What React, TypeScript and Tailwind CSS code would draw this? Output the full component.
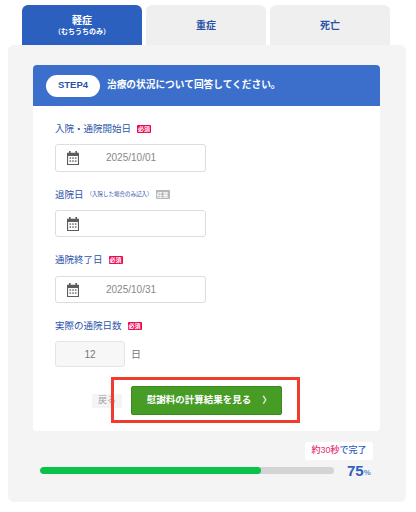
const FONT = "font-['Liberation_Sans','Noto_Sans_CJK_JP',sans-serif]"

function CalendarIcon() {
  return (
    <svg width="12" height="14" viewBox="0 0 12 14" fill="#5c5c5c">
      <rect x="2" y="0" width="1.6" height="3" />
      <rect x="8.4" y="0" width="1.6" height="3" />
      <path fillRule="evenodd" d="M0 1.8h12V14H0zM1.1 5v7.9h9.8V5z" />
      <rect x="2.5" y="6.4" width="1.6" height="1.3" />
      <rect x="5.2" y="6.4" width="1.6" height="1.3" />
      <rect x="7.9" y="6.4" width="1.6" height="1.3" />
      <rect x="2.5" y="9.4" width="1.6" height="1.3" />
      <rect x="5.2" y="9.4" width="1.6" height="1.3" />
      <rect x="7.9" y="9.4" width="1.6" height="1.3" />
    </svg>
  )
}

function Required() {
  return (
    <span className="ml-[6px] flex h-[8px] w-[14px] items-center justify-center rounded-[1px] bg-[#f0064f] text-[6px] font-bold leading-none text-white">
      必須
    </span>
  )
}

function DateField({ value, className }: { value?: string; className: string }) {
  return (
    <div className={`flex w-[151px] items-center rounded-[3px] border border-[#dddddd] bg-white pl-[11px] ${className}`}>
      <CalendarIcon />
      <span className="ml-[27px] text-[10px] leading-none text-[#888888]">{value}</span>
    </div>
  )
}

const TABS = [
  { label: '重症' },
  { label: '死亡' },
]

export default function App() {
  return (
    <div className={`h-[512px] w-[416px] overflow-hidden bg-white pt-[5px] ${FONT}`}>

      {/* Tabs */}
      <div className="ml-[22px] flex gap-[4px]">
        <div className="flex h-[40px] w-[120px] flex-col items-center justify-center rounded-t-[6px] bg-[#2b60bf] text-white">
          <span className="text-[10px] font-bold leading-[13px]">軽症</span>
          <span className="text-[7px] font-bold leading-[9px]">（むちうちのみ）</span>
        </div>
        {TABS.map(t => (
          <div key={t.label} className="flex h-[40px] w-[120px] items-center justify-center rounded-t-[6px] bg-[#efefef] text-[10px] font-bold text-[#2b53a8]">
            {t.label}
          </div>
        ))}
      </div>

      {/* Panel */}
      <div className="ml-[8px] h-[457px] w-[398px] rounded-[6px] bg-[#f4f4f4] pl-[25px] pt-[20px]">
        <div className="h-[366px] w-[347px] rounded-[4px] bg-white">

          {/* Step header */}
          <div className="flex h-[41px] items-center rounded-t-[4px] bg-[#3b6fcb] pl-[13px]">
            <span className="flex h-[22px] w-[54px] items-center justify-center rounded-full bg-white text-[9.5px] font-bold text-[#2b53a8]">
              STEP4
            </span>
            <span className="ml-[7px] text-[9.7px] font-bold text-white">治療の状況について回答してください。</span>
          </div>

          <div className="flex flex-col pl-[22px] pt-[16px]">
            <div className="flex h-[13px] items-center text-[9.5px] leading-none text-[#2b53a8]">
              入院・通院開始日<Required />
            </div>
            <DateField value="2025/10/01" className="mt-[9px] h-[28px]" />

            <div className="mt-[16px] flex h-[13px] items-center text-[9.5px] leading-none text-[#2b53a8]">
              退院日
              <span className="ml-[3px] text-[5.5px]">（入院した場合のみ記入）</span>
              <span className="ml-[3px] flex h-[9px] w-[14px] items-center justify-center rounded-[1px] bg-[#b5b5b5] text-[6px] font-bold text-white">任意</span>
            </div>
            <DateField className="mt-[9px] h-[27px]" />

            <div className="mt-[16px] flex h-[13px] items-center text-[9.5px] leading-none text-[#2b53a8]">
              通院終了日<Required />
            </div>
            <DateField value="2025/10/31" className="mt-[10px] h-[27px]" />

            <div className="mt-[16px] flex h-[13px] items-center text-[9.5px] leading-none text-[#2b53a8]">
              実際の通院日数<Required />
            </div>
            <div className="mt-[9px] flex h-[26px] items-center">
              <div className="flex h-[26px] w-[70px] items-center justify-center rounded-[3px] border border-[#e4e4e4] bg-[#f7f7f7] text-[10px] text-[#777777]">
                12
              </div>
              <span className="ml-[6px] text-[10px] text-[#777777]">日</span>
            </div>

            {/* Buttons */}
            <div className="ml-[37px] mt-[19px] flex items-center">
              <span className="flex h-[14px] w-[30px] items-center justify-center rounded-[2px] bg-[#f4f4f4] text-[9px] text-[#a0a0a0]">戻る</span>
              <div className="relative ml-[9px]">
                <button className="flex h-[29px] w-[151px] items-center justify-center rounded-[2px] border border-[#3a8a1e] bg-[#479c26] pl-[5px] text-[9.5px] font-bold text-white">
                  慰謝料の計算結果を見る
                  <span className="ml-[11px] text-[9px]">〉</span>
                </button>
                <div className="absolute -bottom-[8px] -left-[20px] -right-[18px] -top-[9px] border-[3px] border-[#f23b2f]" />
              </div>
            </div>
          </div>
        </div>

        {/* Progress */}
        <div className="relative mt-[11px]">
          <div className="ml-[272px] flex h-[18px] w-[68px] items-center justify-center rounded-[3px] bg-white text-[9px] font-medium">
            <span className="text-[#e8306f]">約30秒</span>
            <span className="text-[#2b60bf]">で完了</span>
          </div>
          <div className="mt-[1px] flex h-[19px] items-center pl-[7px]">
            <div className="h-[7px] w-[294px] overflow-hidden rounded-full bg-[#d4d4d4]">
              <div className="h-full rounded-full bg-[#0ac24a]" style={{ width: '75%' }} />
            </div>
            <span className="ml-[13px] text-[15px] font-bold leading-none text-[#2b60bf]">75</span>
            <span className="mt-[4px] text-[8px] font-bold leading-none text-[#5f87cf]">%</span>
          </div>
        </div>
      </div>
    </div>
  )
}
